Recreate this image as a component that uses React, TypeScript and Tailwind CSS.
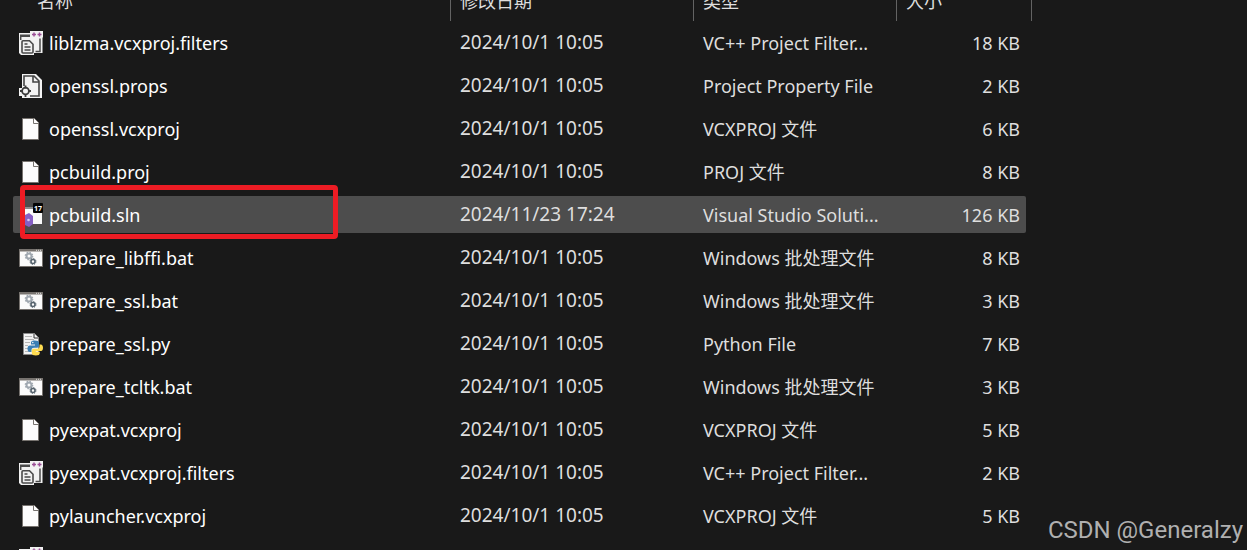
import clsx from 'clsx';

type IconKind = 'filters' | 'props' | 'blank' | 'solution' | 'batch' | 'python';

interface FileRow {
	name: string;
	date: string;
	type: string;
	size: string;
	icon: IconKind;
	selected?: boolean;
}

const files: FileRow[] = [
	{ name: 'liblzma.vcxproj.filters', date: '2024/10/1 10:05', type: 'VC++ Project Filter...', size: '18 KB', icon: 'filters' },
	{ name: 'openssl.props', date: '2024/10/1 10:05', type: 'Project Property File', size: '2 KB', icon: 'props' },
	{ name: 'openssl.vcxproj', date: '2024/10/1 10:05', type: 'VCXPROJ 文件', size: '6 KB', icon: 'blank' },
	{ name: 'pcbuild.proj', date: '2024/10/1 10:05', type: 'PROJ 文件', size: '8 KB', icon: 'blank' },
	{ name: 'pcbuild.sln', date: '2024/11/23 17:24', type: 'Visual Studio Soluti...', size: '126 KB', icon: 'solution', selected: true },
	{ name: 'prepare_libffi.bat', date: '2024/10/1 10:05', type: 'Windows 批处理文件', size: '8 KB', icon: 'batch' },
	{ name: 'prepare_ssl.bat', date: '2024/10/1 10:05', type: 'Windows 批处理文件', size: '3 KB', icon: 'batch' },
	{ name: 'prepare_ssl.py', date: '2024/10/1 10:05', type: 'Python File', size: '7 KB', icon: 'python' },
	{ name: 'prepare_tcltk.bat', date: '2024/10/1 10:05', type: 'Windows 批处理文件', size: '3 KB', icon: 'batch' },
	{ name: 'pyexpat.vcxproj', date: '2024/10/1 10:05', type: 'VCXPROJ 文件', size: '5 KB', icon: 'blank' },
	{ name: 'pyexpat.vcxproj.filters', date: '2024/10/1 10:05', type: 'VC++ Project Filter...', size: '2 KB', icon: 'filters' },
	{ name: 'pylauncher.vcxproj', date: '2024/10/1 10:05', type: 'VCXPROJ 文件', size: '5 KB', icon: 'blank' },
	{ name: '', date: '', type: '', size: '', icon: 'filters' },
];

function FileIcon({ kind }: { kind: IconKind }) {
	return (
		<svg className="h-6 w-6 shrink-0" viewBox="0 0 24 24" fill="none" aria-hidden="true">
			{kind === 'filters' && (
				<>
					<path d="M0 2h11V0h13v6.500h-.5V22H15v2H2l-2-2z" fill="#f2f2f2" />
					<path d="M1 3.500h10V6H1z" fill="#4a4a4a" />
					<path d="M1.700 6v3M21 7.500V20.500h-4.500" stroke="#4a4a4a" strokeWidth="1.500" />
					<path d="M4 9.800h6.500l3.500 3.500V21q0 1-1 1H4q-1 0-1-1V10.800q0-1 1-1z" stroke="#4a4a4a" strokeWidth="1.600" />
					<path d="M5.500 13h3M5.500 16h6M5.500 19h6" stroke="#4a4a4a" strokeWidth="1.300" />
					<path d="M13 3.500h4M15 1.500v4M18.500 3.500h4M20.500 1.500v4" stroke="#9b4f96" strokeWidth="1.500" />
				</>
			)}
			{kind === 'props' && (
				<>
					<path d="M3 0h14l6 6v18H3v-2H0v-8h3z" fill="#f3f3f3" />
					<path d="M5 12V2h10l5 5v15h-9M14 2v6h6" stroke="#454545" strokeWidth="1.6" />
					<circle cx="6.500" cy="17" r="3.400" stroke="#3c3c3c" strokeWidth="1.8" />
					<path d="M6.500 11.500v3M6.500 20v3M1 17h3M9 17h3" stroke="#3c3c3c" strokeWidth="1.8" />
				</>
			)}
			{kind === 'blank' && (
				<>
					<path d="M3.5 1.5h12l4 4v17h-16z" fill="#fcfcfc" stroke="#77736f" />
					<path d="M14.5 2v4.5H19" stroke="#77736f" />
				</>
			)}
			{kind === 'solution' && (
				<>
					<path d="M3 5h20v16H3z" fill="#fafafa" />
					<path d="M3 4h12v2H3z" fill="#8c8c8c" />
					<path d="m10 10 4 3v8l-4 3-4-2-5-2v-4l5-4z" fill="#8660c5" />
					<circle cx="9.5" cy="17" r="1.3" fill="#d9c8f3" />
					<rect x="14" width="10" height="10" rx="1" fill="#050505" />
					<text x="19" y="7.5" textAnchor="middle" fontSize="7" fontWeight="700" fill="#fff">
						17
					</text>
				</>
			)}
			{kind === 'batch' && (
				<>
					<path d="M.5 3.5h23v17H.5z" fill="#fbfbfb" stroke="#77736f" />
					<path d="M0 3h24v2.500H0z" fill="#77736f" />
					<path d="M17 4.3h1M19 4.3h1M21 4.3h1" stroke="#ddd" />
					<circle cx="10" cy="10" r="2.5" stroke="#a0a8b0" strokeWidth="2" />
					<circle cx="10" cy="10" r="3.7" stroke="#a0a8b0" strokeWidth="1.3" strokeDasharray="1.5 1.4" />
					<circle cx="14" cy="15.5" r="2" stroke="#56636d" strokeWidth="1.6" />
					<circle cx="14" cy="15.5" r="3" stroke="#56636d" strokeWidth="1" strokeDasharray="1.2 1.15" />
				</>
			)}
			{kind === 'python' && (
				<>
					<path d="M4.5 1.5h11l4 4v17h-15z" fill="#f3f3f3" stroke="#8a8a8a" />
					<path d="M15 2v4h4" stroke="#333" />
					<path d="M6 4.5h7M6 7.5h9M6 10.5h5M6 13.5h3M6 16.5h3M6 19.5h5" stroke="#b5b5b5" />
					<path d="M15.5 8.5c-3 0-3.5 1.2-3.5 2.5v1.5h4v1h-5c-2 0-2.5 1.5-2.5 3.2 0 2 .8 3.3 2.5 3.3h1.500v-2c0-1.500 1-2.300 2.500-2.300h3c1.200 0 2-.8 2-2V11c0-1.700-1.500-2.500-4.500-2.500z" fill="#3b7fb5" />
					<path d="M20.500 12.500v2c0 1.500-1 2.300-2.300 2.300h-3.400c-1.300 0-2 .9-2 2V21c0 1.700 1.400 2.500 4 2.500s4-.8 4-2.500v-1.300h-4v-.8h5.200c1.500 0 2-1.500 2-3.200s-.7-3.200-2.200-3.200z" fill="#ffdc51" />
					<circle cx="13.800" cy="10.500" r=".7" fill="#fff" />
				</>
			)}
		</svg>
	);
}

export default function App() {
	return (
		<div className="relative h-screen overflow-hidden bg-[#191919] pl-[13px] pr-[215px] font-['Noto_Sans','Noto_Sans_CJK_SC',sans-serif] text-lg text-[#dedede]">
			<table className="-mt-4 w-full table-fixed border-separate border-spacing-0 whitespace-nowrap">
				<colgroup>
					<col />
					<col className="w-[243px]" />
					<col className="w-[203px]" />
					<col className="w-[135px]" />
				</colgroup>
				<thead>
					<tr className="h-[37px] text-left align-top leading-[34px]">
						<th className="border-r border-[#636363] p-0 pl-6 align-top font-normal">名称</th>
						<th className="border-r border-[#636363] p-0 pl-[9px] align-top font-normal">修改日期</th>
						<th className="border-r border-[#636363] p-0 pl-[9px] align-top font-normal">类型</th>
						<th className="border-r border-[#636363] p-0 pl-[9px] align-top font-normal">大小</th>
					</tr>
				</thead>
				<tbody>
					{files.map((file, i) => (
						<tr key={i} className="h-[43px]">
							<td className="p-0">
								<div className={clsx('relative flex h-[37px] items-center gap-[6px] rounded-l-xs pl-[6px] text-white', file.selected && 'bg-[#4d4d4d]')}>
									<FileIcon kind={file.icon} />
									<span>{file.name}</span>
									{/* red marker around the solution file */}
									{file.selected && <div className="absolute -top-[11px] left-[7px] h-[54px] w-[318px] rounded-sm border-5 border-[#ed1c24]" />}
								</div>
							</td>
							<td className="p-0">
								<div className={clsx('flex h-[37px] items-center pl-[9px] text-[19px]', file.selected && 'bg-[#4d4d4d]')}>{file.date}</div>
							</td>
							<td className="p-0">
								<div className={clsx('flex h-[37px] items-center pl-[9px]', file.selected && 'bg-[#4d4d4d]')}>{file.type}</div>
							</td>
							<td className="p-0 pr-[6px]">
								<div className={clsx('flex h-[37px] items-center justify-end rounded-r-xs pr-[6px]', file.selected && 'bg-[#4d4d4d]')}>{file.size}</div>
							</td>
						</tr>
					))}
				</tbody>
			</table>

			<p className="absolute right-1 bottom-1 font-[Roboto,sans-serif] text-2xl text-[#b0b0b0]">CSDN @Generalzy</p>
		</div>
	);
}
